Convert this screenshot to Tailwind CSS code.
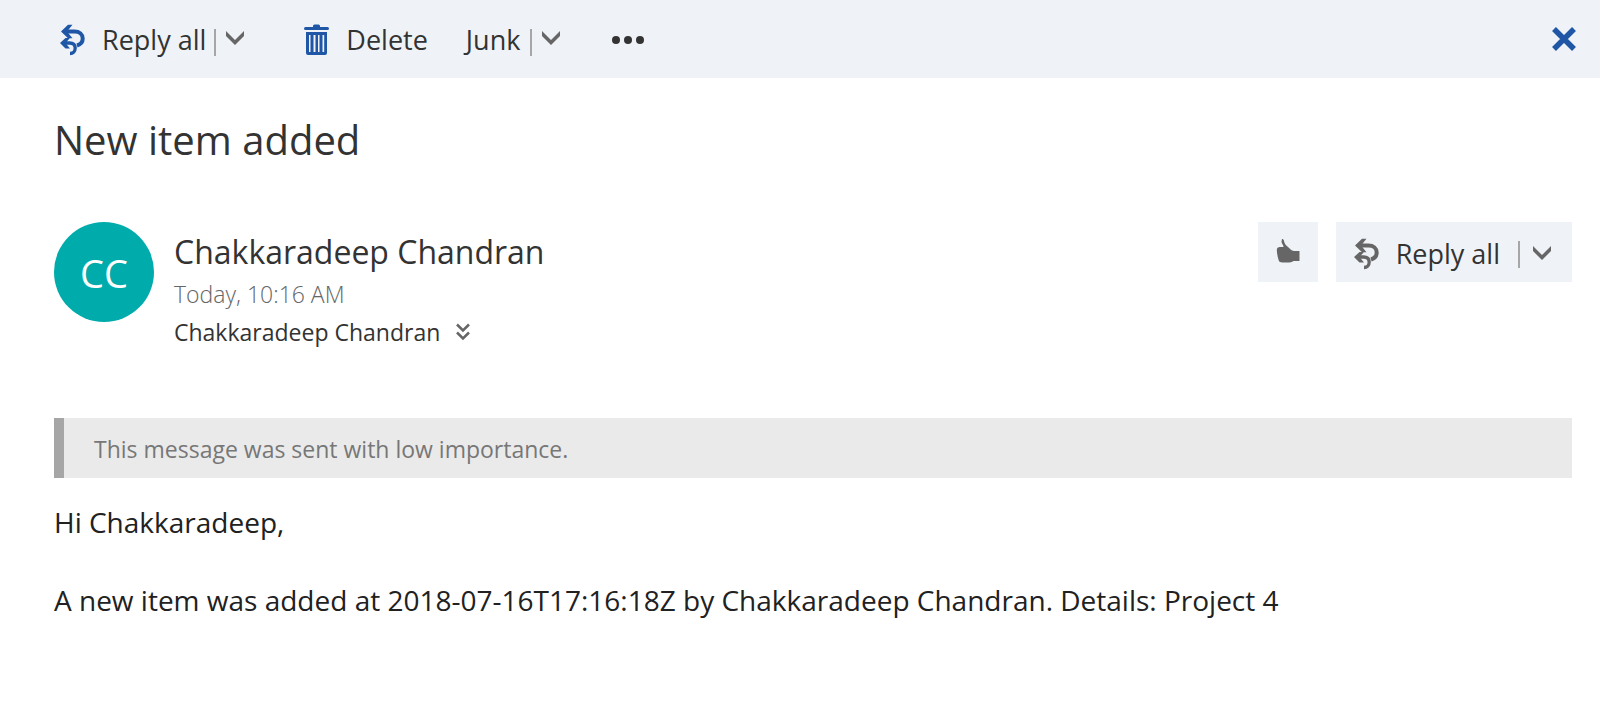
<!DOCTYPE html>
<html lang="en">
<head>
<meta charset="utf-8">
<meta name="viewport" content="width=device-width, initial-scale=1">
<title>New item added</title>
<script src="https://cdn.jsdelivr.net/npm/@tailwindcss/browser@4"></script>
</head>
<body class="min-h-screen bg-white font-['Open_Sans','Noto_Sans',sans-serif] text-[#333333]">

<svg class="hidden" aria-hidden="true">
  <symbol id="reply-all" viewBox="0 0 26 32">
    <g fill="none" stroke="currentColor">
      <path stroke-width="4" d="M4 7.500H14.500C19.500 7.500 22.700 10.500 22.700 14.500C22.700 18 20.500 20.500 17 21.500"/>
      <path stroke-width="3.300" d="M3 19H9.500C13.500 19 15.200 21 15.200 24C15.200 27.500 13 29.500 10 29.500"/>
    </g>
    <path fill="currentColor" d="M1 7.500L8 .8H12.500L7 7.500L12.500 14.200H8ZM0 19L5.500 14H10L5.500 19L10 24.500H5.500Z"/>
  </symbol>
  <symbol id="chevron" viewBox="0 0 18 14">
    <path fill="currentColor" d="M0 0L9 9L18 0V5L9 14L0 5Z"/>
  </symbol>
</svg>

<header class="flex h-[78px] items-center bg-[#eff3f8] pt-[2px] pr-6 pl-[60px] text-[27px]">
  <div class="flex items-center">
    <button type="button" class="flex items-center gap-4"><svg class="h-8 w-[26px] text-[#1f57a6]" aria-hidden="true"><use href="#reply-all"/></svg>Reply all</button>
    <span class="mt-1 ml-2 h-[27px] w-[2px] bg-[#a6a6a6]"></span>
    <button type="button" aria-label="More reply options" class="pb-1 pl-[10px]"><svg class="h-[14px] w-[18px] text-[#666666]" aria-hidden="true"><use href="#chevron"/></svg></button>
  </div>
  <button type="button" class="ml-[60px] flex items-center gap-4">
    <svg class="h-8 w-[26px] text-[#1f57a6]" viewBox="0 0 26 32" aria-hidden="true">
      <path fill="currentColor" fill-rule="evenodd" d="M9 3V2Q9 .5 10.500 .5H14.500Q16 .5 16 2V3H23.500Q25 3 25 4.500Q25 6 23.500 6H1.500Q0 6 0 4.500Q0 3 1.500 3ZM2 8H23V29Q23 31 21 31H4Q2 31 2 29ZM5 11V28H6.500V11ZM9.500 11V28H11.500V11ZM14 11V28H15.500V11ZM18.500 11V28H20.200V11Z"/>
    </svg>Delete</button>
  <div class="ml-[38px] flex items-center">
    <button type="button">Junk</button>
    <span class="mt-1 ml-[10px] h-[27px] w-[2px] bg-[#a6a6a6]"></span>
    <button type="button" aria-label="More junk options" class="pb-1 pl-[10px]"><svg class="h-[14px] w-[18px] text-[#666666]" aria-hidden="true"><use href="#chevron"/></svg></button>
  </div>
  <button type="button" aria-label="More actions" class="ml-[52px]">
    <svg class="h-2 w-8" viewBox="0 0 32 8" fill="currentColor" aria-hidden="true"><circle cx="4" cy="4" r="4"/><circle cx="16" cy="4" r="4"/><circle cx="28" cy="4" r="4"/></svg>
  </button>
  <button type="button" aria-label="Close" class="ml-auto pb-[2px] text-[#1f57a6]">
    <svg class="size-6" viewBox="0 0 24 24" aria-hidden="true"><path fill="none" stroke="currentColor" stroke-width="5.500" d="M2 2L22 22M22 2L2 22"/></svg>
  </button>
</header>

<main class="pt-[38px] pr-7 pb-10 pl-[54px]">
  <h1 class="text-[40px] leading-12">New item added</h1>

  <section class="mt-[58px] flex items-start">
    <div class="flex size-[100px] items-center justify-center rounded-full bg-[#00abab] pt-[2px] text-[38px] text-white">CC</div>
    <div class="ml-5 pt-2">
      <h2 class="text-[32px] leading-11">Chakkaradeep Chandran</h2>
      <p class="text-[23px] leading-10 font-light text-[#666666]">Today, 10:16 AM</p>
      <div class="flex items-center gap-4 text-[23px] leading-9">
        <span>Chakkaradeep Chandran</span>
        <button type="button" aria-label="Show details"><svg class="h-[18px] w-[14px] text-[#666666]" viewBox="0 0 14 18" aria-hidden="true"><path fill="none" stroke="currentColor" stroke-width="2.500" d="M1 1.500L7 7.500L13 1.500M1 9.500L7 15.500L13 9.500"/></svg></button>
      </div>
    </div>
    <div class="ml-auto flex gap-[18px]">
      <button type="button" aria-label="Like" class="flex size-[60px] items-center justify-center bg-[#eff3f8] pb-[2px] text-[#666666]">
        <svg class="h-6 w-6" viewBox="0 0 24 24" aria-hidden="true"><path fill="currentColor" d="M6 0C7 0 7.800 .6 8 2C8.500 5 10 6.500 12 8C14 9.500 15 11.500 18 12H23.500V22H17.500C16 23 14 23.500 11.500 23.500H6.500C4.500 23.500 3 22.800 2.600 21C1.500 18 1 14 .8 11C.8 9 2 8 4 8H7.500C7.500 6 5.500 4.500 5.500 2.500Z"/></svg>
      </button>
      <div class="flex h-[60px] items-center bg-[#eff3f8] pt-1 pr-[21px] pl-[18px] text-[27px]">
        <button type="button" class="flex items-center gap-4"><svg class="h-8 w-[26px] text-[#666666]" aria-hidden="true"><use href="#reply-all"/></svg>Reply all</button>
        <span class="ml-[18px] h-[27px] w-[2px] bg-[#a6a6a6]"></span>
        <button type="button" aria-label="More reply options" class="pb-[2px] pl-[13px]"><svg class="h-[14px] w-[18px] text-[#666666]" aria-hidden="true"><use href="#chevron"/></svg></button>
      </div>
    </div>
  </section>

  <p class="mt-[68px] border-l-10 border-[#a6a6a6] bg-[#eaeaea] pt-[2px] pl-[30px] text-[23px] leading-[58px] text-[#777777]">This message was sent with low importance.</p>

  <article class="mt-[25px] flex flex-col gap-10 text-[28px] leading-[38px] text-[#212121]">
    <p>Hi Chakkaradeep,</p>
    <p>A new item was added at 2018-07-16T17:16:18Z by Chakkaradeep Chandran. Details: Project 4</p>
  </article>
</main>
</body>
</html>
